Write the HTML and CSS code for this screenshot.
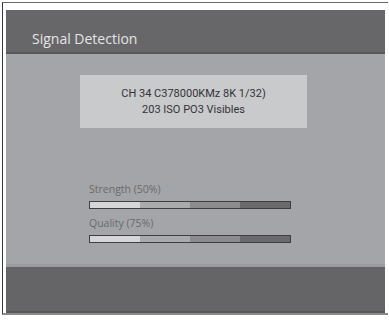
FILE: index.html
```html
<!DOCTYPE html>
<html>
<head>
<meta charset="utf-8">
<link rel="stylesheet" href="styles.css">
</head>
<body>
<div class="frame">
  <div class="panel">
    <div class="header"><span class="title">Signal Detection</span></div>
    <div class="content">
      <div class="info">
        <div>CH 34 C378000KMz 8K 1/32)</div>
        <div>203 ISO PO3 Visibles</div>
      </div>
      <div class="meters">
        <div class="label">Strength (50%)</div>
        <div class="bar"><span class="s1"></span><span class="s2"></span><span class="s3"></span><span class="s4"></span></div>
        <div class="label">Quality (75%)</div>
        <div class="bar"><span class="s1"></span><span class="s2"></span><span class="s3"></span><span class="s4"></span></div>
      </div>
    </div>
    <div class="footer"></div>
  </div>
</div>
</body>
</html>
```
FILE: styles.css
```css
html, body { margin: 0; padding: 0; background: #fff; }
.frame {
  margin: 2px 0 0 2px;
  width: 386px;
  height: 313px;
  border-top: 1px solid #6a6a6a;
  border-left: 1px solid #3a3a3a;
  border-bottom: 2px solid #8a8a8a;
  padding: 7px 0 3px 3px;
  box-sizing: border-box;
}
.panel {
  width: 379px;
  height: 303px;
  display: flex;
  flex-direction: column;
}
.header {
  background: #676769;
  border-bottom: 2px solid #58585a;
  display: flex;
  align-items: flex-end;
  padding: 0 0 5px 26px;
  box-sizing: content-box;
  height: 37px;
}
.title {
  font-family: "Open Sans", sans-serif;
  font-size: 14px;
  color: #e4e4e4;
  line-height: 16px;
}
.content {
  background: #a4a5a8;
  border-bottom: 3px solid #9a9b9e;
  display: flex;
  flex-direction: column;
  padding-top: 21px;
  box-sizing: border-box;
  height: 213px;
}
.info {
  margin-left: 74px;
  width: 227px;
  height: 53px;
  background: #c9cacc;
  font-family: Roboto, sans-serif;
  font-size: 11px;
  line-height: 16px;
  color: #333335;
  text-align: center;
  padding-top: 11px;
  box-sizing: border-box;
}
.meters {
  margin-left: 83px;
  margin-top: 54px;
  display: flex;
  flex-direction: column;
}
.label {
  font-family: "Open Sans", sans-serif;
  font-size: 10.5px;
  line-height: 14px;
  color: #6a6a6c;
}
.bar {
  margin-top: 5px;
  margin-bottom: 7px;
  width: 202px;
  height: 8px;
  border: 1px solid #3e3e40;
  box-sizing: border-box;
  display: flex;
}
.bar span { flex: 1; height: 100%; }
.s1 { background: #d6d6d8; }
.s2 { background: #a9aaac; }
.s3 { background: #8c8c8e; }
.s4 { background: #6a6a6c; }
.footer {
  flex: 1;
  background: #656567;
  border-bottom: 2px solid #58585a;
}
```
